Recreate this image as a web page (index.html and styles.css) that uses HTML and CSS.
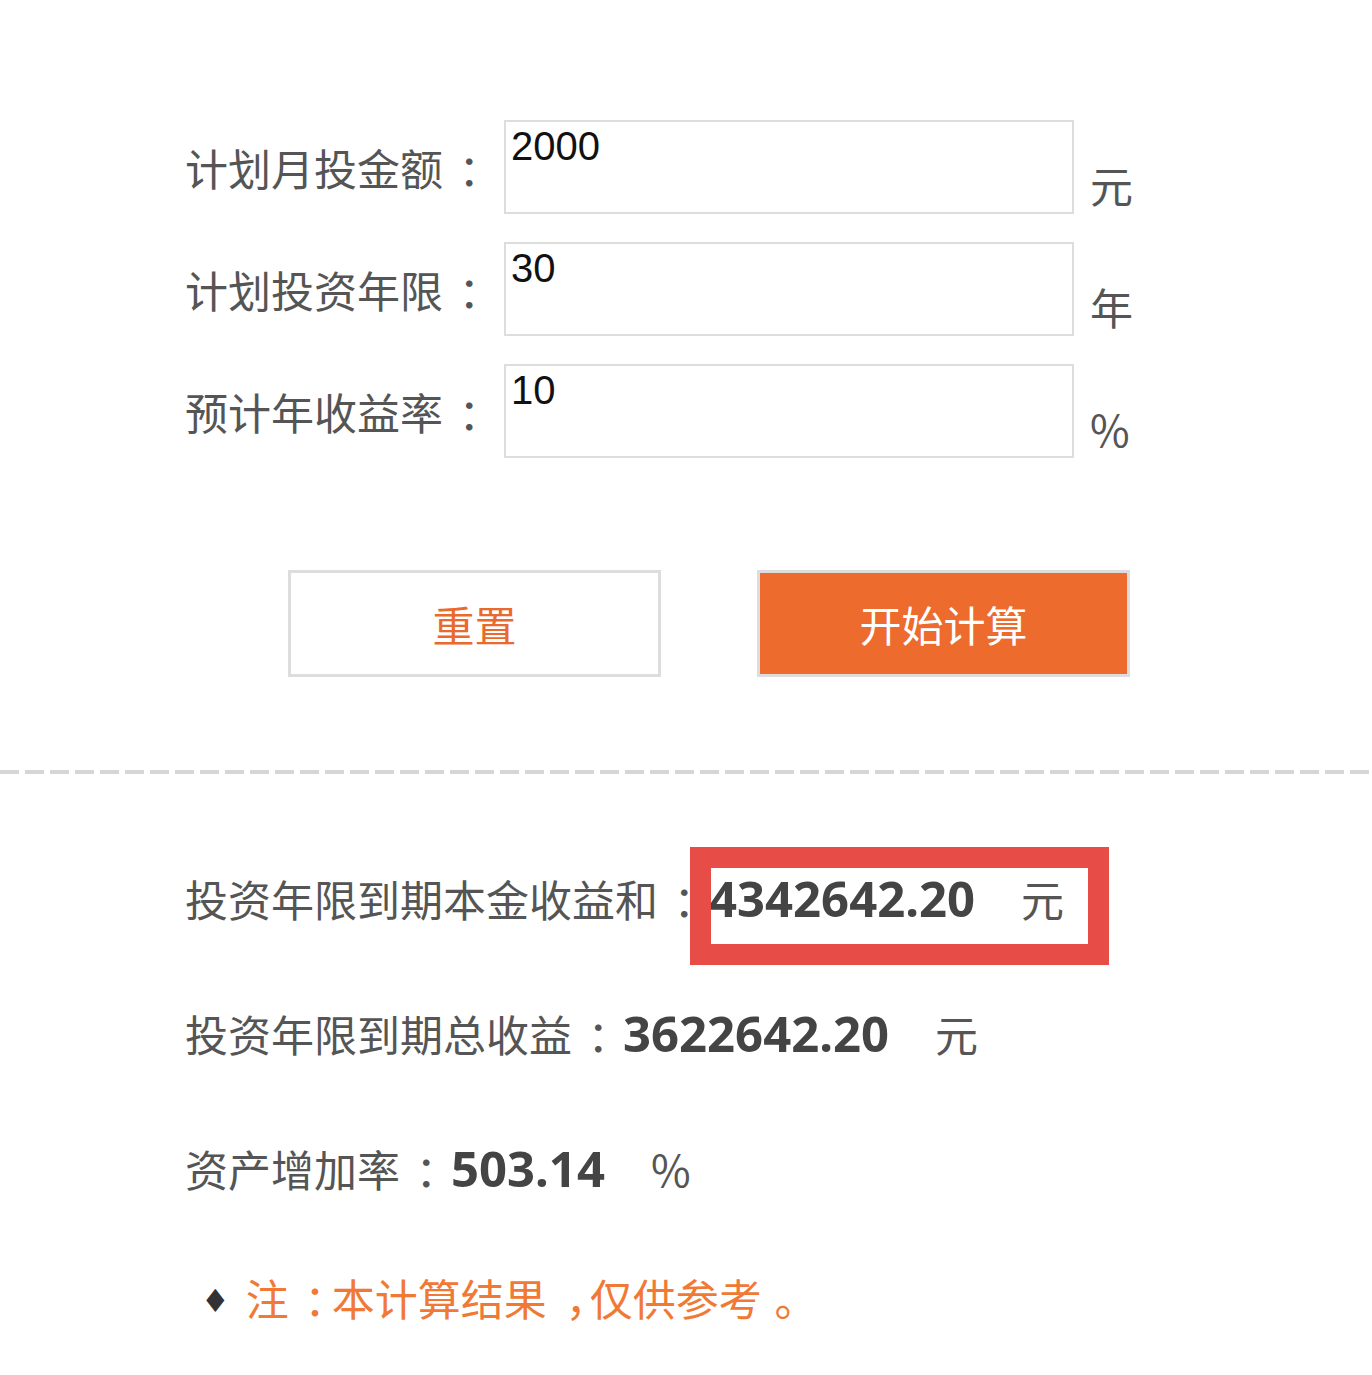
FILE: index.html
```html
<!DOCTYPE html>
<html lang="zh-CN">
<head>
    <meta charset="UTF-8">
    <meta name="viewport" content="width=device-width, initial-scale=1.0">
    <title>定投计算器</title>
    <link rel="stylesheet" href="styles.css">
</head>
<body>

<div class="calc">
    <form class="calc-form" id="calc-form">
        <div class="form-row">
            <label class="form-label" for="monthly">计划月投金额<span class="punct">：</span></label>
            <input class="form-input" type="text" id="monthly" value="2000">
            <span class="form-unit">元</span>
        </div>
        <div class="form-row">
            <label class="form-label" for="years">计划投资年限<span class="punct">：</span></label>
            <input class="form-input" type="text" id="years" value="30">
            <span class="form-unit">年</span>
        </div>
        <div class="form-row">
            <label class="form-label" for="rate">预计年收益率<span class="punct">：</span></label>
            <input class="form-input" type="text" id="rate" value="10">
            <span class="form-unit">%</span>
        </div>

        <div class="btn-row">
            <button type="button" class="btn btn-reset">重置</button>
            <button type="button" class="btn btn-start">开始计算</button>
        </div>
    </form>
</div>

<div class="divider"></div>

<div class="calc result">
    <div class="result-row">
        投资年限到期本金收益和<span class="punct">：</span><b class="result-num">4342642.20</b><span class="result-unit">元</span>
        <div class="highlight"></div>
    </div>
    <div class="result-row">
        投资年限到期总收益<span class="punct">：</span><b class="result-num">3622642.20</b><span class="result-unit">元</span>
    </div>
    <div class="result-row">
        资产增加率<span class="punct">：</span><b class="result-num">503.14</b><span class="result-unit">%</span>
    </div>
    <p class="note"><span class="note-dot">♦</span>注<span class="punct">：</span>本计算结果<span class="punct punct-comma">，</span>仅供参考<span class="punct punct-stop">。</span></p>
</div>

</body>
</html>
```

FILE: styles.css
```css
body {
    margin: 0;
    background: #fff;
    font-family: 'Noto Sans CJK SC', 'Noto Sans', sans-serif;
    color: #555;
}
/* full-width punctuation sits centred in its em box */
.punct {
    padding-left: 0.36em;
    letter-spacing: -0.36em;
}
.punct-comma {
    padding-left: 0.44em;
    letter-spacing: -0.44em;
}
.punct-stop {
    padding-left: 0.3em;
    letter-spacing: -0.3em;
}
.calc {
    padding-left: 185px;
}
.calc-form {
    padding-top: 120px;
}
.form-row {
    display: flex;
    align-items: center;
    height: 94px;
    margin-bottom: 28px;
}
.form-label {
    width: 319px;
    font-size: 43px;
    line-height: 43px;
    color: #555;
    white-space: nowrap;
}
.form-input {
    box-sizing: border-box;
    width: 570px;
    height: 94px;
    margin: 0;
    padding: 4px 4px 46px 5px;
    border: 2px solid #ddd;
    font-family: 'Liberation Sans', Arial, sans-serif;
    font-size: 40px;
    line-height: 40px;
    color: #111;
    outline: none;
}
.form-unit {
    align-self: flex-end;
    margin-left: 16px;
    margin-bottom: 8px;
    font-size: 43px;
    line-height: 43px;
    color: #555;
}
.btn-row {
    display: flex;
    gap: 96px;
    margin-top: 112px;
    margin-left: 103px;
}
.btn {
    box-sizing: border-box;
    width: 373px;
    height: 107px;
    border: 3px solid #ddd;
    font-family: 'Noto Sans CJK SC', sans-serif;
    font-size: 42px;
    cursor: pointer;
}
.btn-reset {
    background: #fff;
    color: #ea6a2e;
}
.btn-start {
    background: #ec6b2d;
    color: #fff;
}
.divider {
    height: 4px;
    margin-top: 93px;
    background: repeating-linear-gradient(90deg, #d6d6d6 0, #d6d6d6 19px, transparent 19px, transparent 25px);
}
.result {
    padding-top: 94px;
}
.result-row {
    position: relative;
    height: 60px;
    margin-bottom: 75px;
    font-size: 43px;
    line-height: 60px;
    color: #555;
    white-space: nowrap;
}
.result-num {
    margin-left: 8px;
    font-family: 'Noto Sans', sans-serif;
    font-size: 49px;
    font-weight: bold;
    color: #444;
}
.result-unit {
    margin-left: 46px;
}
.highlight {
    position: absolute;
    left: 505px;
    top: -21px;
    box-sizing: border-box;
    width: 419px;
    height: 118px;
    border: 21px solid #e84c47;
}
.note {
    margin: -6px 0 0;
    padding-left: 16px;
    font-size: 43px;
    line-height: 60px;
    color: #f07a35;
    white-space: nowrap;
}
.note-dot {
    margin-right: 16px;
    font-family: 'DejaVu Sans', sans-serif;
    font-size: 32px;
    color: #333;
    vertical-align: 4px;
}
```
